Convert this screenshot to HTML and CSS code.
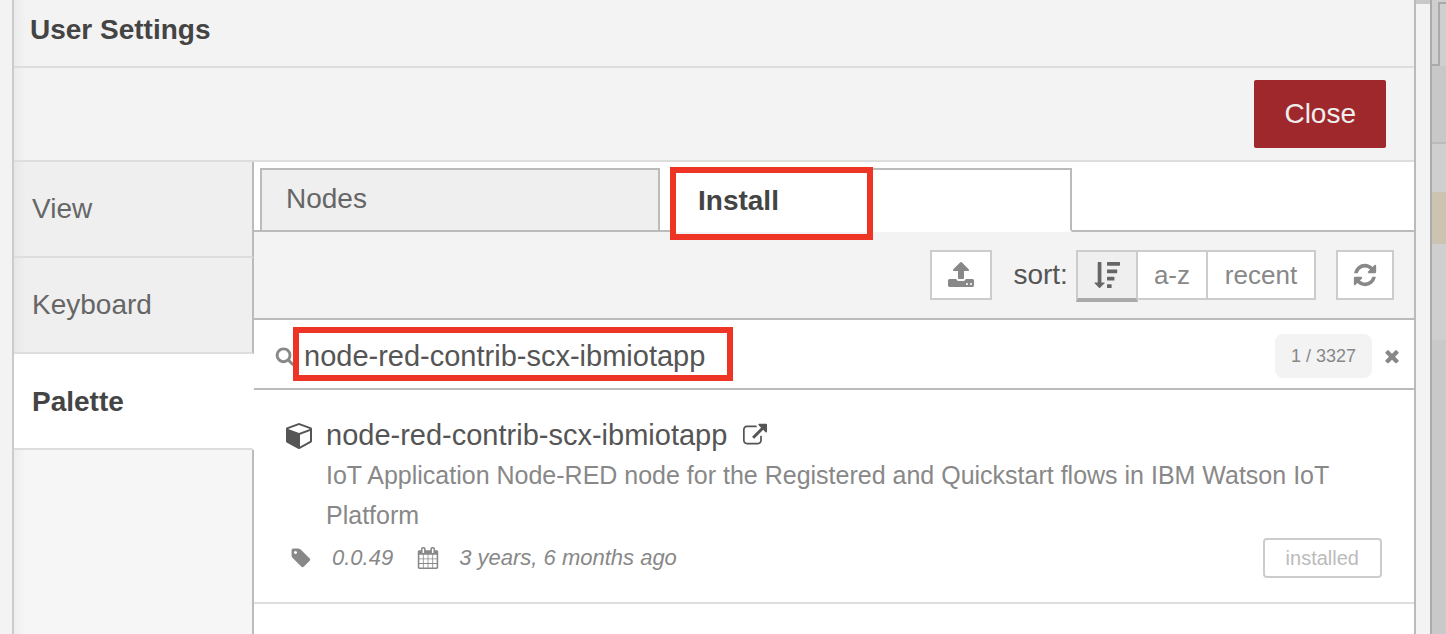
FILE: index.html
```html
<!DOCTYPE html>
<html lang="en">
<head>
<meta charset="utf-8">
<meta name="viewport" content="width=device-width, initial-scale=1">
<title>User Settings</title>
<link rel="stylesheet" href="styles.css">
</head>
<body>
<div class="workspace">
  <main class="tray">
    <h1 class="tray-title">User Settings</h1>
    <div class="tray-toolbar"><button class="close-button" type="button">Close</button></div>
    <div class="settings">
      <nav class="sections" aria-label="Settings sections">
        <button class="section" type="button">View</button>
        <button class="section" type="button">Keyboard</button>
        <button class="section is-active" type="button" aria-current="page">Palette</button>
        <div class="sections-rest"></div>
      </nav>
      <section class="palette">
        <div class="tabs" role="tablist">
          <button class="tab" type="button" role="tab" aria-selected="false">Nodes</button>
          <button class="tab is-active" type="button" role="tab" aria-selected="true">Install<span class="marker marker-tab"></span></button>
        </div>
        <div class="toolbar">
          <button class="tool tool-upload" type="button" aria-label="Upload module"><svg class="icon-28" viewBox="0 0 1792 1792" aria-hidden="true"><path d="M1344 1472q0-26-19-45t-45-19-45 19-19 45 19 45 45 19 45-19 19-45zm256 0q0-26-19-45t-45-19-45 19-19 45 19 45 45 19 45-19 19-45zm128-224v320q0 40-28 68t-68 28h-1472q-40 0-68-28t-28-68v-320q0-40 28-68t68-28h427q21 56 70.500 92t110.500 36h256q61 0 110.500-36t70.500-92h427q40 0 68 28t28 68zm-325-648q-17 40-59 40h-256v448q0 26-19 45t-45 19h-256q-26 0-45-19t-19-45v-448h-256q-42 0-59-40-17-39 14-69l448-448q18-19 45-19t45 19l448 448q31 30 14 69z"/></svg></button>
          <span class="sort-label" id="sort-label">sort:</span>
          <div class="sort-group" role="group" aria-labelledby="sort-label">
            <button class="tool tool-relevance is-selected" type="button" aria-pressed="true" aria-label="relevance"><svg class="icon-26" viewBox="0 0 1792 1792" aria-hidden="true"><path d="M1216 1568v192q0 14-9 23t-23 9h-256q-14 0-23-9t-9-23v-192q0-14 9-23t23-9h256q14 0 23 9t9 23zm-480-128q0 12-10 24l-319 320q-10 9-23 9-12 0-23-9l-320-320q-15-16-7-35 8-20 30-20h192v-1376q0-14 9-23t23-9h192q14 0 23 9t9 23v1376h192q14 0 23 9t9 23zm672-384v192q0 14-9 23t-23 9h-448q-14 0-23-9t-9-23v-192q0-14 9-23t23-9h448q14 0 23 9t9 23zm192-512v192q0 14-9 23t-23 9h-640q-14 0-23-9t-9-23v-192q0-14 9-23t23-9h640q14 0 23 9t9 23zm192-512v192q0 14-9 23t-23 9h-832q-14 0-23-9t-9-23v-192q0-14 9-23t23-9h832q14 0 23 9t9 23z"/></svg></button>
            <button class="tool" type="button" aria-pressed="false">a-z</button>
            <button class="tool tool-recent" type="button" aria-pressed="false">recent</button>
          </div>
          <button class="tool tool-refresh" type="button" aria-label="Refresh"><svg class="icon-26" viewBox="0 0 1792 1792" aria-hidden="true"><path d="M1639 1056q0 5-1 7-64 268-268 434.500t-478 166.500q-146 0-282.500-55t-243.500-157l-129 129q-19 19-45 19t-45-19-19-45v-448q0-26 19-45t45-19h448q26 0 45 19t19 45-19 45l-137 137q71 66 161 102t187 36q134 0 250-65t186-179q11-17 53-117 8-23 30-23h192q13 0 22.500 9.500t9.500 22.500zm25-800v448q0 26-19 45t-45 19h-448q-26 0-45-19t-19-45 19-45l138-138q-148-137-349-137-134 0-250 65t-186 179q-11 17-53 117-8 23-30 23h-199q-13 0-22.500-9.500t-9.500-22.500v-7q65-268 270-434.500t480-166.500q146 0 284 55.500t245 156.500l130-129q19-19 45-19t45 19 19 45z"/></svg></button>
        </div>
        <div class="search">
          <svg class="icon-20 search-icon" viewBox="0 0 1792 1792" aria-hidden="true"><path d="M1216 832q0-185-131.500-316.500t-316.500-131.500-316.500 131.500-131.500 316.500 131.500 316.500 316.500 131.500 316.500-131.500 131.500-316.500zm512 832q0 52-38 90t-90 38q-54 0-90-38l-343-342q-179 124-399 124-143 0-273.500-55.500t-225-150-150-225-55.500-273.500 55.500-273.500 150-225 225-150 273.500-55.500 273.500 55.500 225 150 150 225 55.500 273.500q0 220-124 399l343 343q37 37 37 90z"/></svg>
          <div class="search-field">
            <input class="search-input" type="text" aria-label="search modules" value="node-red-contrib-scx-ibmiotapp" spellcheck="false">
            <span class="marker marker-search"></span>
          </div>
          <span class="count">1 / 3327</span>
          <button class="clear" type="button" aria-label="Clear search"><svg class="icon-20" viewBox="0 0 1792 1792" aria-hidden="true"><path d="M1490 1322q0 40-28 68l-136 136q-28 28-68 28t-68-28l-294-294-294 294q-28 28-68 28t-68-28l-136-136q-28-28-28-68t28-68l294-294-294-294q-28-28-28-68t28-68l136-136q28-28 68-28t68 28l294 294 294-294q28-28 68-28t68 28l136 136q28 28 28 68t-28 68l-294 294 294 294q28 28 28 68z"/></svg></button>
        </div>
        <ul class="modules">
          <li class="module">
            <div class="module-head">
              <svg class="icon-28" viewBox="0 0 1792 1792" aria-hidden="true"><path d="M896 1629l640-349v-636l-640 233v752zm-64-865l698-254-698-254-698 254zm832-252v768q0 35-18 65t-49 47l-704 384q-28 16-61 16t-61-16l-704-384q-31-17-49-47t-18-65v-768q0-40 23-73t61-47l704-256q22-8 44-8t44 8l704 256q38 14 61 47t23 73z"/></svg>
              <span class="module-name">node-red-contrib-scx-ibmiotapp</span>
              <a class="module-link" href="#" aria-label="Open module page"><svg class="icon-24" viewBox="64 0 1792 1792" aria-hidden="true"><path d="M1472 992v320q0 119-84.500 203.500t-203.500 84.500h-832q-119 0-203.500-84.500t-84.500-203.500v-832q0-119 84.500-203.500t203.500-84.500h704q14 0 23 9t9 23v64q0 14-9 23t-23 9h-704q-66 0-113 47t-47 113v832q0 66 47 113t113 47h832q66 0 113-47t47-113v-320q0-14 9-23t23-9h64q14 0 23 9t9 23zm384-864v512q0 26-19 45t-45 19-45-19l-176-176-652 652q-10 10-23 10t-23-10l-114-114q-10-10-10-23t10-23l652-652-176-176q-19-19-19-45t19-45 45-19h512q26 0 45 19t19 45z"/></svg></a>
            </div>
            <p class="module-text">IoT Application Node-RED node for the Registered and Quickstart flows in IBM Watson IoT Platform</p>
            <div class="module-meta">
              <svg class="icon-22" viewBox="0 0 1792 1792" aria-hidden="true"><path d="M576 448q0-53-37.500-90.500t-90.500-37.500-90.500 37.500-37.500 90.500 37.500 90.500 90.500 37.500 90.500-37.500 37.500-90.500zm1067 576q0 53-37 90l-491 492q-39 37-91 37-53 0-90-37l-715-716q-38-37-64.500-101t-26.500-117v-416q0-52 38-90t90-38h416q53 0 117 26.500t102 64.500l715 714q37 39 37 91z"/></svg>
              <span class="module-version">0.0.49</span>
              <svg class="icon-22" viewBox="0 0 1792 1792" aria-hidden="true"><path d="M192 1664h288v-288h-288v288zm352 0h320v-288h-320v288zm-352-352h288v-320h-288v320zm352 0h320v-320h-320v320zm-352-384h288v-288h-288v288zm736 736h320v-288h-320v288zm-384-736h320v-288h-320v288zm768 736h288v-288h-288v288zm-384-352h320v-320h-320v320zm-352-864v-288q0-13-9.500-22.500t-22.500-9.500h-64q-13 0-22.500 9.500t-9.500 22.500v288q0 13 9.500 22.500t22.500 9.500h64q13 0 22.500-9.500t9.500-22.500zm736 864h288v-320h-288v320zm-384-384h320v-288h-320v288zm384 0h288v-288h-288v288zm32-480v-288q0-13-9.500-22.500t-22.500-9.500h-64q-13 0-22.500 9.500t-9.500 22.500v288q0 13 9.500 22.500t22.500 9.500h64q13 0 22.500-9.500t9.500-22.500zm384-64v1280q0 52-38 90t-90 38h-1408q-52 0-90-38t-38-90v-1280q0-52 38-90t90-38h128v-96q0-66 47-113t113-47h64q66 0 113 47t47 113v96h384v-96q0-66 47-113t113-47h64q66 0 113 47t47 113v96h128q52 0 90 38t38 90z"/></svg>
              <span class="module-date">3 years, 6 months ago</span>
              <button class="installed" type="button" disabled>installed</button>
            </div>
          </li>
        </ul>
      </section>
    </div>
  </main>
  <div class="resizer"></div>
  <aside class="backdrop" aria-hidden="true">
    <div class="backdrop-tabs"><div class="backdrop-tab-edge"></div><div class="backdrop-tab"></div></div>
    <div class="backdrop-bar"></div>
    <div class="backdrop-row"></div>
    <div class="backdrop-selected"></div>
    <div class="backdrop-rows"></div>
    <div class="backdrop-rest"></div>
  </aside>
</div>
</body>
</html>
```
FILE: styles.css
```css
:root {
  --line: #bbb;
  --line-soft: #ddd;
  --line-button: #ccc;
  --panel: #f3f3f3;
  --muted: #888;
  --text: #555;
  --strong: #444;
  --red: #ee3424;
  --edge: linear-gradient(to right, rgba(0, 0, 0, 0.03), rgba(0, 0, 0, 0) 12px);
}

* { box-sizing: border-box; }

body {
  margin: 0;
  overflow: hidden;
  background: var(--panel);
  color: var(--text);
  font-family: "Liberation Sans", Arial, sans-serif;
  font-size: 28px;
  line-height: 40px;
}

button, input {
  margin: 0;
  border: 0;
  border-radius: 0;
  background: none;
  color: inherit;
  font: inherit;
}

svg { display: block; flex: none; fill: currentColor; }

.icon-20 { width: 20px; height: 20px; }
.icon-22 { width: 22px; height: 22px; }
.icon-24 { width: 24px; height: 24px; }
.icon-26 { width: 26px; height: 26px; }
.icon-28 { width: 28px; height: 28px; }

.workspace { display: flex; min-height: 100vh; padding-left: 12px; }

.tray {
  display: flex;
  flex: 1;
  flex-direction: column;
  min-width: 0;
  border-left: 2px solid #ccc;
  border-right: 2px solid var(--line);
}

.tray-title {
  margin: 0;
  padding: 10px 16px 16px;
  border-bottom: 2px solid var(--line-soft);
  background-image: var(--edge);
  color: var(--strong);
  font-size: 28px;
}

.tray-toolbar {
  display: flex;
  justify-content: flex-end;
  padding: 12px 28px;
  border-bottom: 2px solid var(--line-soft);
  background-image: var(--edge);
}

.close-button {
  padding: 14px 30px;
  border-radius: 2px;
  background: #9e282b;
  color: #eee;
}

.settings { display: flex; flex: 1; }

.sections { display: flex; flex: none; flex-direction: column; width: 240px; }

.section {
  padding: 27px 18px;
  border-right: 2px solid var(--line);
  border-bottom: 2px solid var(--line-soft);
  background: var(--edge), #efefef;
  color: #666;
  text-align: left;
}

.section.is-active {
  padding: 28px 18px 26px;
  border-right-color: #fff;
  background: #fff;
  color: var(--strong);
  font-weight: bold;
}

.sections-rest { flex: 1; border-right: 2px solid var(--line); background: var(--edge), #f6f6f6; }

.palette { flex: 1; min-width: 0; background: #fff; }

.tabs {
  display: flex;
  gap: 12px;
  padding: 6px 6px 0;
  box-shadow: inset 0 -2px var(--line);
}

.tab {
  width: 400px;
  padding: 9px 24px 11px;
  border: 2px solid var(--line);
  background: #efefef;
  color: #666;
  text-align: left;
}

.tab.is-active {
  position: relative;
  padding: 11px 24px 9px;
  border-bottom-color: #fff;
  background: #fff;
  color: var(--strong);
  font-weight: bold;
}

.marker { position: absolute; border: 6px solid var(--red); pointer-events: none; }
.marker-tab { top: -3px; left: -4px; width: 203px; height: 73px; }
.marker-search { top: -9px; left: -11px; width: 440px; height: 54px; }

.toolbar {
  display: flex;
  align-items: flex-start;
  justify-content: flex-end;
  padding: 18px 20px;
  border-bottom: 2px solid var(--line);
  background: var(--panel);
}

.tool {
  display: flex;
  align-items: center;
  justify-content: center;
  height: 50px;
  padding: 0 16px;
  border: 2px solid var(--line-button);
  background: #fff;
  color: var(--muted);
  font-size: 26px;
}

.tool-upload { width: 62px; }
.sort-label { padding: 5px 8px 0 21px; }
.sort-group { display: flex; height: 50px; }
.sort-group .tool + .tool { border-left: 0; }
.tool-recent { width: 108px; }

.tool.is-selected {
  height: 52px;
  border-bottom: 4px solid #aaa;
  background: #efefef;
  color: #666;
}

.tool-refresh { width: 58px; margin-left: 20px; }

.search {
  display: flex;
  align-items: center;
  padding: 14px 12px 10px 21px;
  border-bottom: 2px solid var(--line);
}

.search-icon { color: var(--muted); }
.search-field { position: relative; flex: 1; margin: 0 9px; }

.search-input {
  display: block;
  width: 100%;
  height: 40px;
  padding: 0;
  font-size: 29px;
  outline: none;
}

.count {
  padding: 2px 16px;
  border-radius: 8px;
  background: var(--panel);
  color: var(--muted);
  font-size: 18px;
}

.clear { margin-left: 10px; padding: 0; color: var(--muted); }

.modules { margin: 0; padding: 0; list-style: none; }
.module { padding: 25px 32px 24px; border-bottom: 2px solid var(--line-soft); }
.module-head { display: flex; align-items: center; gap: 12px; font-size: 29px; }
.module-link { margin-left: 4px; color: inherit; }

.module-text {
  margin: 0;
  padding-left: 40px;
  color: var(--muted);
  font-size: 25px;
}

.module-meta {
  display: flex;
  align-items: center;
  padding: 3px 0 0 4px;
  color: var(--muted);
  font-size: 22px;
  font-style: italic;
}

.module-version { margin: 0 24px 0 20px; }
.module-date { margin-left: 20px; }

.installed {
  height: 40px;
  margin-left: auto;
  padding: 0 21px;
  border: 2px solid var(--line-button);
  border-radius: 4px;
  color: var(--line);
  font-size: 20px;
  font-style: normal;
  line-height: 36px;
}

.resizer { width: 14px; border-top: 4px solid #c8c8c8; }

.backdrop {
  display: flex;
  flex: none;
  flex-direction: column;
  width: 16px;
  border-left: 2px solid #aaa;
  background: #cfcfcf;
}

.backdrop-tabs { display: flex; height: 66px; padding-top: 2px; }
.backdrop-tab-edge { width: 6px; border-bottom: 2px solid #aaa; }
.backdrop-tab { flex: 1; border-top: 2px solid #aaa; border-left: 2px solid #aaa; }
.backdrop-bar { height: 78px; border-bottom: 2px solid var(--line); background: #c8c8c8; }
.backdrop-row { height: 48px; }
.backdrop-selected { height: 52px; background: #cdc3b1; }
.backdrop-rows { height: 96px; }
.backdrop-rest { flex: 1; background: #c9c9c9; }
```
